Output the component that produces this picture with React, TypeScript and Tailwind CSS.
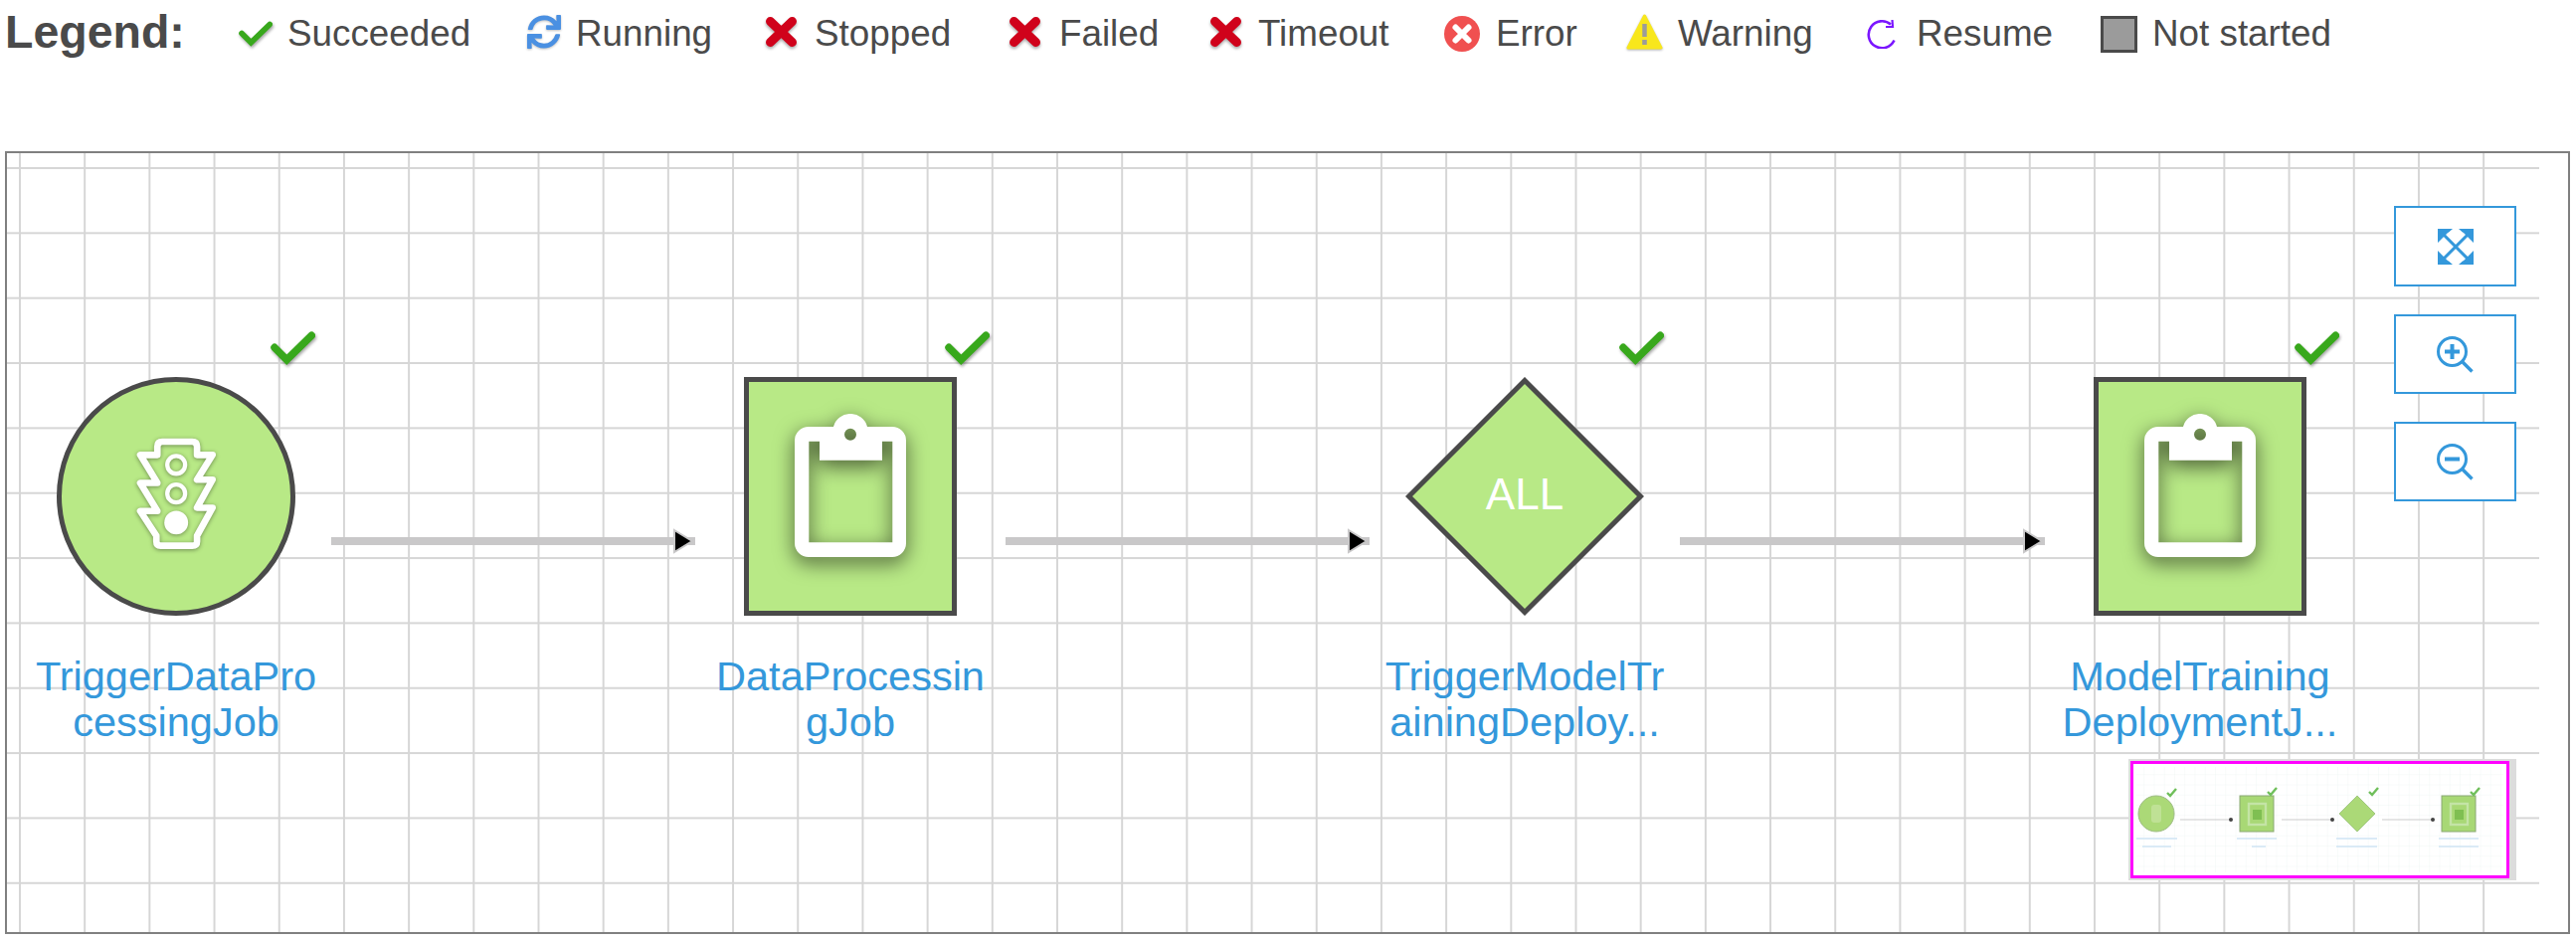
import type { ReactNode } from "react";
import { FaSync } from "react-icons/fa";

function Check({ className }: { className: string }) {
    return (
        <svg viewBox="0 0 45 34" className={`${className} drop-shadow-[1px_2px_1.5px_rgba(0,0,0,0.35)]`}>
            <path d="M4 16.3 L16.3 28.7 L41.3 4.3" fill="none" stroke="#38a81c" strokeWidth="7.5" strokeLinecap="round" />
        </svg>
    );
}

function RedX() {
    return (
        <svg viewBox="0 0 31 30" className="mb-1 h-[30px] w-[31px] drop-shadow-[0_2px_1.5px_rgba(0,0,0,0.35)]">
            <path d="M4.5 4.5 L26.5 25.5 M26.5 4.5 L4.5 25.5" stroke="#d0021b" strokeWidth="9" strokeLinecap="round" />
        </svg>
    );
}

const legend: { label: string; slot: string; icon: ReactNode }[] = [
    { label: "Succeeded", slot: "w-[289px]", icon: <span className="w-[49px]"><Check className="h-[26px] w-[34px]" /></span> },
    { label: "Running", slot: "w-[241px]", icon: <span className="w-[50px]"><FaSync className="mb-[5px] h-[34px] w-[36px] text-[#4a90e2] drop-shadow-[0_1px_1px_rgba(0,0,0,0.25)]" /></span> },
    { label: "Stopped", slot: "w-[245px]", icon: <span className="w-[49px]"><RedX /></span> },
    { label: "Failed", slot: "w-[202px]", icon: <span className="w-[50px]"><RedX /></span> },
    { label: "Timeout", slot: "w-[235px]", icon: <span className="w-[48px]"><RedX /></span> },
    {
        label: "Error",
        slot: "w-[183px]",
        icon: (
            <span className="w-[52px]">
                <svg viewBox="0 0 36 36" className="h-9 w-9">
                    <circle cx="18" cy="18" r="18" fill="#f05050" />
                    <path d="M11.5 11.5 L24.5 24.5 M24.5 11.5 L11.5 24.5" stroke="#fff" strokeWidth="6" strokeLinecap="round" />
                </svg>
            </span>
        ),
    },
    {
        label: "Warning",
        slot: "w-[242px]",
        icon: (
            <span className="w-[52px]">
                <svg viewBox="0 0 37 37" className="mb-[3px] h-[37px] w-[37px] drop-shadow-[0_1px_1px_rgba(0,0,0,0.3)]">
                    <path d="M18.5 2 L35 34 H2 Z" fill="#f8e71c" stroke="#f8e71c" strokeWidth="3" strokeLinejoin="round" />
                    <path d="M18.5 10 V23" stroke="#9b9b9b" strokeWidth="4.5" />
                    <rect x="16.2" y="26" width="4.6" height="5" fill="#9b9b9b" />
                </svg>
            </span>
        ),
    },
    {
        label: "Resume",
        slot: "w-[235px]",
        icon: (
            <span className="w-[50px]">
                <svg viewBox="0 0 29 30" className="h-[30px] w-[29px]">
                    <path d="M24 5.5 A13.5 13.5 0 1 0 27.5 21.5" fill="none" stroke="#7b16ff" strokeWidth="2.6" />
                    <path d="M25.5 1 L26 8 L19 8" fill="none" stroke="#7b16ff" strokeWidth="2.2" />
                </svg>
            </span>
        ),
    },
    {
        label: "Not started",
        slot: "",
        icon: (
            <span className="w-[52px]">
                <span className="block h-[37px] w-[37px] border-[3px] border-[#4a4a4a] bg-[#9b9b9b]" />
            </span>
        ),
    },
];

function Clipboard() {
    return (
        <svg viewBox="0 0 112 144" className="h-[144px] w-[112px] drop-shadow-[0_6px_10px_rgba(0,0,0,0.6)]">
            <path
                fill="#fff"
                fillRule="evenodd"
                d="M14 13 H39 A17.6 17.6 0 0 1 73 13 H98 A14 14 0 0 1 112 27 V130 A14 14 0 0 1 98 144 H14 A14 14 0 0 1 0 130 V27 A14 14 0 0 1 14 13 Z M14.3 27.7 V129.3 H98.3 V27.7 H88 V46.7 H25 V27.7 Z M50 20.7 a6 6 0 1 0 12 0 a6 6 0 1 0 -12 0 Z"
            />
        </svg>
    );
}

function TrafficLight() {
    return (
        <svg viewBox="400 410 256 356" className="h-[119px] w-[85px] drop-shadow-[0_1px_2px_rgba(0,0,0,0.4)]">
            <path
                fill="none"
                stroke="#fff"
                strokeWidth="20"
                strokeLinejoin="round"
                d="M470 470 V445 Q470 430 485 430 H575 Q590 430 590 445 V470 H637 L590 545 H637 L590 630 H637 L590 715 V732 Q590 745 575 745 H480 Q467 745 467 732 V715 L418 640 H470 L418 555 H470 L418 470 Z"
            />
            <circle cx="527" cy="500" r="27" fill="none" stroke="#fff" strokeWidth="13" />
            <circle cx="527" cy="587" r="27" fill="none" stroke="#fff" strokeWidth="13" />
            <circle cx="527" cy="675" r="36" fill="#fff" />
        </svg>
    );
}

function Edge({ width }: { width: string }) {
    return (
        <div className={`mt-[161px] shrink-0 px-[36px] ${width}`}>
            <div className="relative h-2 bg-[#c9c8c9]">
                <svg viewBox="0 0 23 26" className="absolute right-0 top-[-9px] h-[26px] w-[23px]">
                    <path d="M2 2 L20 13 L2 24 Z" fill="#000" stroke="#c9c8c9" strokeWidth="2" />
                </svg>
            </div>
        </div>
    );
}

function Node({ lines, children }: { lines: string[]; children: ReactNode }) {
    return (
        <div className="flex w-60 shrink-0 flex-col items-center">
            <div className="relative flex h-60 w-60 items-center justify-center">
                {children}
                <Check className="absolute left-[215px] top-[-46px] h-[34px] w-[45px]" />
            </div>
            <div className="mt-[38px] w-[320px] shrink-0 text-center text-[41.5px] leading-[46px] text-[#3498db]">
                {lines.map((l) => (
                    <div key={l}>{l}</div>
                ))}
            </div>
        </div>
    );
}

function ZoomBtn({ children, className }: { children: ReactNode; className: string }) {
    return (
        <button className={`flex w-[123px] items-center justify-center border-2 border-[#3498db] bg-white ${className}`}>
            {children}
        </button>
    );
}

function Thumbnail() {
    const blue = "#cfe5f5";
    return (
        <svg viewBox="0 0 375 112" className="h-full w-full blur-[0.7px]">
            <defs>
                <pattern id="mini" width="10.25" height="10.25" patternUnits="userSpaceOnUse">
                    <path d="M0 0 H10.25 M0 0 V10.25" stroke="#ebf3f1" strokeWidth="0.6" fill="none" />
                </pattern>
            </defs>
            <rect x="3" y="3" width="369" height="106" fill="url(#mini)" />
            <path d="M47 56 H97 M149 56 H199 M250 56 H300" stroke="#ccc" strokeWidth="1.2" />
            <circle cx="98" cy="56" r="2" fill="#444" />
            <circle cx="200" cy="56" r="2" fill="#444" />
            <circle cx="301" cy="56" r="2" fill="#444" />

            <circle cx="23" cy="50" r="18" fill="#abd977" stroke="#9dbb83" strokeWidth="1" />
            <rect x="18" y="41" width="10" height="18" rx="3" fill="#bfe195" />

            <rect x="107" y="32" width="34" height="36" fill="#a8d875" stroke="#8aa874" strokeWidth="1" />
            <rect x="116" y="40" width="17" height="21" fill="none" stroke="#c4e4a6" strokeWidth="2.4" />
            <rect x="120" y="46" width="9" height="10" fill="#7fbf52" />

            <path d="M225 32 L243 50 L225 68 L207 50 Z" fill="#abd977" stroke="#a2c884" strokeWidth="1" />

            <rect x="310" y="32" width="34" height="36" fill="#a8d875" stroke="#8aa874" strokeWidth="1" />
            <rect x="319" y="40" width="17" height="21" fill="none" stroke="#c4e4a6" strokeWidth="2.4" />
            <rect x="323" y="46" width="9" height="10" fill="#7fbf52" />

            <path d="M34 29 L37 32 L43 25 M135 28 L138 31 L144 24 M237 28 L240 31 L246 24 M339 28 L342 31 L348 24" fill="none" stroke="#6fbf5a" strokeWidth="2.4" />

            <path d="M3 75 H44 M9 83 H38 M104 75 H144 M119 83 H133 M204 75 H245 M204 83 H245 M307 75 H347 M307 83 H347" stroke={blue} strokeWidth="1.4" />
        </svg>
    );
}

export default function App() {
    return (
        <div className="h-[946px] w-[2590px] overflow-hidden bg-white pl-[5px] font-['Liberation_Sans',Arial,sans-serif] text-[#4a4a4a]">
            <div className="flex h-[68px] items-center">
                <div className="mb-1 w-[235px] text-[46.5px] font-bold leading-none">Legend:</div>
                {legend.map((item) => (
                    <div key={item.label} className={`flex items-center ${item.slot}`}>
                        {item.icon}
                        <span className="whitespace-nowrap text-[36.8px] leading-none">{item.label}</span>
                    </div>
                ))}
            </div>

            <div className="relative mt-[84px] h-[787px] w-[2579px] overflow-hidden border-2 border-[#808080]">
                <div className="absolute inset-y-0 left-0 w-[2546px] bg-[linear-gradient(to_right,#d6d6d6_2px,transparent_2px),linear-gradient(to_bottom,#d6d6d6_2px,transparent_2px)] bg-[size:65.2px_65.35px] bg-[position:12px_14px]" />

                <div className="relative flex pl-[50px] pt-[225px]">
                    <Node lines={["TriggerDataPro", "cessingJob"]}>
                        <div className="flex h-60 w-60 items-center justify-center rounded-full border-[5px] border-[#4a4a4a] bg-[#b8e986] pb-[6px]">
                            <TrafficLight />
                        </div>
                    </Node>
                    <Edge width="w-[438px]" />
                    <Node lines={["DataProcessin", "gJob"]}>
                        <div className="flex h-60 w-[214px] items-center justify-center border-[5px] border-[#4a4a4a] bg-[#b8e986] pb-[22px]">
                            <Clipboard />
                        </div>
                    </Node>
                    <Edge width="w-[438px]" />
                    <Node lines={["TriggerModelTr", "ainingDeploy..."]}>
                        <svg viewBox="0 0 240 240" className="absolute inset-0 h-full w-full">
                            <path d="M120 3.5 L236.5 120 L120 236.5 L3.5 120 Z" fill="#b8e986" stroke="#4a4a4a" strokeWidth="5" />
                        </svg>
                        <span className="relative pb-1 text-[44px] leading-none text-white">ALL</span>
                    </Node>
                    <Edge width="w-[439px]" />
                    <Node lines={["ModelTraining", "DeploymentJ..."]}>
                        <div className="flex h-60 w-[214px] items-center justify-center border-[5px] border-[#4a4a4a] bg-[#b8e986] pb-[22px]">
                            <Clipboard />
                        </div>
                    </Node>
                </div>

                <div className="absolute left-[2400px] top-[53px] flex flex-col gap-[28px]">
                    <ZoomBtn className="h-[81px]">
                        <svg viewBox="0 0 36 36" className="h-9 w-9" fill="#3498db">
                            <path d="M0 0 H15 L11 3.5 H6 L0 9 Z M36 0 H21 L25 3.5 H30 L36 9 Z M0 36 H15 L11 32.5 H6 L0 27 Z M36 36 H21 L25 32.5 H30 L36 27 Z" />
                            <path d="M0 0 L14 0 L0 14 Z M36 0 L22 0 L36 14 Z M0 36 L14 36 L0 22 Z M36 36 L22 36 L36 22 Z" />
                            <path d="M3 3 L33 33 M33 3 L3 33" stroke="#3498db" strokeWidth="3" />
                        </svg>
                    </ZoomBtn>
                    <ZoomBtn className="h-[80px]">
                        <svg viewBox="0 0 37 37" className="h-[37px] w-[37px]" fill="none" stroke="#3498db">
                            <circle cx="15.5" cy="15.5" r="14" strokeWidth="3" />
                            <path d="M15.5 8 V23 M8 15.5 H23" strokeWidth="4" />
                            <path d="M25.5 25.5 L35.5 35.5" strokeWidth="3.4" />
                        </svg>
                    </ZoomBtn>
                    <ZoomBtn className="h-[80px]">
                        <svg viewBox="0 0 37 37" className="h-[37px] w-[37px]" fill="none" stroke="#3498db">
                            <circle cx="15.5" cy="15.5" r="14" strokeWidth="3" />
                            <path d="M8 15.5 H23" strokeWidth="4" />
                            <path d="M25.5 25.5 L35.5 35.5" strokeWidth="3.4" />
                        </svg>
                    </ZoomBtn>
                </div>

                <div className="absolute left-[2133px] top-[609px] h-[122px] w-[390px] border-2 border-r-[7px] border-[#dcdcdc] bg-white">
                    <div className="h-full w-full border-[3px] border-[#ff00ff]">
                        <Thumbnail />
                    </div>
                </div>
            </div>
        </div>
    );
}
